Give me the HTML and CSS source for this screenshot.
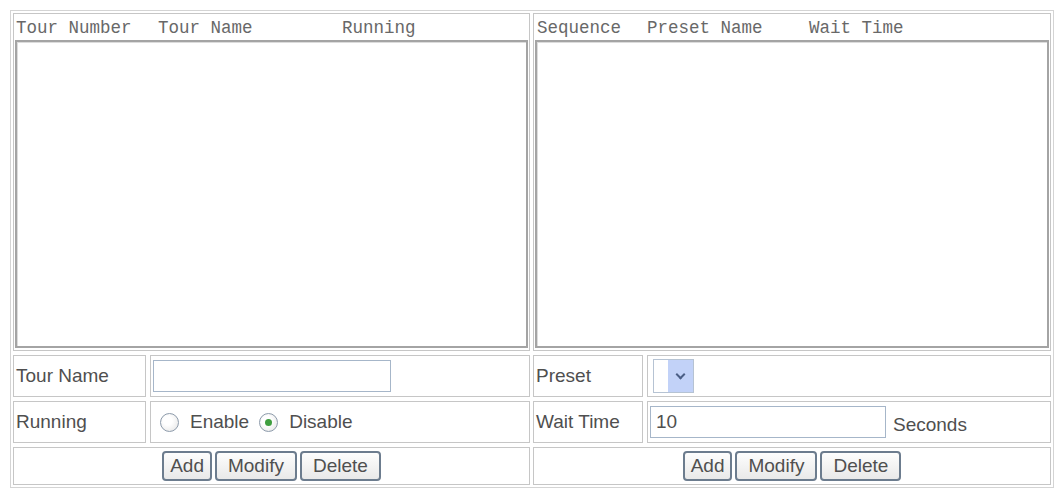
FILE: index.html
```html
<!DOCTYPE html>
<html lang="en">
<head>
  <meta charset="UTF-8" />
  <title>Preset Tour</title>
  <link rel="stylesheet" href="styles.css">
</head>
<body>
  <div class="frame">

    <!-- tours -->
    <div class="half tours">
      <div class="cell list-cell">
        <div class="list-head">
          <span class="col-a">Tour Number</span><span class="col-b">Tour Name</span><span>Running</span>
        </div>
        <div class="listbox"></div>
      </div>

      <div class="cell label">Tour Name</div>
      <div class="cell value">
        <input type="text" class="text-input name-input" />
      </div>

      <div class="cell label">Running</div>
      <div class="cell value radios">
        <span class="radio"></span><span class="radio-text">Enable</span>
        <span class="radio checked"></span><span class="radio-text">Disable</span>
      </div>

      <div class="cell buttons">
        <button>Add</button><button>Modify</button><button>Delete</button>
      </div>
    </div>

    <!-- sequence of presets in a tour -->
    <div class="half sequence">
      <div class="cell list-cell">
        <div class="list-head">
          <span class="col-a">Sequence</span><span class="col-b">Preset Name</span><span>Wait Time</span>
        </div>
        <div class="listbox"></div>
      </div>

      <div class="cell label">Preset</div>
      <div class="cell value">
        <div class="dropdown"><span class="dropdown-btn"></span></div>
      </div>

      <div class="cell label">Wait Time</div>
      <div class="cell value">
        <input type="text" class="text-input wait-input" value="10" />
        <span class="unit">Seconds</span>
      </div>

      <div class="cell buttons">
        <button>Add</button><button>Modify</button><button>Delete</button>
      </div>
    </div>

  </div>
</body>
</html>
```

FILE: styles.css
```css
body {
  margin: 0;
  background: #ffffff;
  font-family: 'Liberation Sans', Arial, sans-serif;
  color: #4f4f4f;
}

.frame {
  margin: 10px 0 0 10px;
  width: 1044px;
  box-sizing: border-box;
  border: 1px solid #d4d4d4;
  padding: 2px;
  display: grid;
  grid-template-columns: 517px 518px;
  column-gap: 3px;
}

.half {
  display: grid;
  grid-template-rows: 338px 42px 42px 38px;
  gap: 4px;
}

.tours {
  grid-template-columns: 133px 1fr;
}

.sequence {
  grid-template-columns: 110px 1fr;
}

.cell {
  border: 1px solid #c6c6c6;
  box-sizing: border-box;
}

.list-cell,
.buttons {
  grid-column: 1 / 3;
}

.list-cell {
  padding: 4px 1px 2px 1px;
  display: flex;
  flex-direction: column;
}

.list-head {
  height: 20px;
  line-height: 20px;
  padding-left: 1px;
  font-family: 'Liberation Mono', 'Courier New', monospace;
  font-size: 17.5px;
  color: #686868;
  white-space: nowrap;
}

.list-head span {
  display: inline-block;
}

.tours .col-a { width: 142px; }
.tours .col-b { width: 184px; }
.sequence .list-head { padding-left: 2px; }
.sequence .col-a { width: 110px; }
.sequence .col-b { width: 162px; }

.listbox {
  flex: 1;
  margin-top: 2px;
  border: 2px solid #a4a4a4;
  box-shadow: inset 1px 1px 0 #dcdcdc;
  background: #ffffff;
}

.label,
.value {
  display: flex;
  align-items: center;
  font-size: 19px;
}

.label {
  padding-left: 2px;
}

.value {
  padding-left: 2px;
}

.text-input {
  height: 32px;
  box-sizing: border-box;
  border: 1px solid #a6b6c9;
  padding: 0 5px;
  font-family: 'Liberation Sans', Arial, sans-serif;
  font-size: 19px;
  color: #4f4f4f;
  background: #ffffff;
}

.name-input { width: 238px; }
.wait-input { width: 236px; }

.unit {
  margin: 6px 0 0 7px;
}

.radios {
  padding-left: 9px;
}

.radio {
  width: 19px;
  height: 19px;
  box-sizing: border-box;
  border: 1px solid #8d9bab;
  border-radius: 50%;
  background: radial-gradient(circle at 40% 40%, #ffffff 30%, #e2e2e2 100%);
  position: relative;
}

.radio.checked::after {
  content: "";
  position: absolute;
  left: 5px;
  top: 5px;
  width: 7px;
  height: 7px;
  border-radius: 50%;
  background: #3f9e3f;
}

.radio-text {
  margin: 0 10px 0 11px;
}

.dropdown {
  width: 41px;
  height: 34px;
  box-sizing: border-box;
  border: 1px solid #b6c3d3;
  background: #ffffff;
  display: flex;
  justify-content: flex-end;
  margin-left: 3px;
}

.dropdown-btn {
  width: 25px;
  background: #c2d2f8;
  position: relative;
}

/* chevron */
.dropdown-btn::after {
  content: "";
  position: absolute;
  left: 9px;
  top: 11px;
  width: 5px;
  height: 5px;
  border-right: 2px solid #4b5f86;
  border-bottom: 2px solid #4b5f86;
  transform: rotate(45deg);
}

.buttons {
  display: flex;
  justify-content: center;
  align-items: center;
  gap: 3px;
}

button {
  height: 30px;
  padding: 0 11px;
  border: 2px solid #6c7c8e;
  border-radius: 4px;
  background: linear-gradient(#fdfdfd, #e9e9e9);
  font-family: 'Liberation Sans', Arial, sans-serif;
  font-size: 19px;
  color: #4f4f4f;
  cursor: pointer;
}

button:first-child {
  padding: 0 6px;
}
```
